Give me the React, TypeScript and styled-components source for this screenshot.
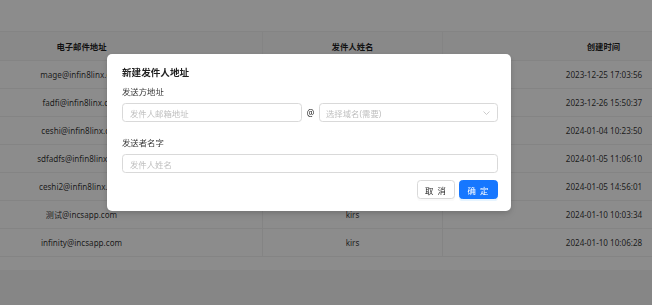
import React from "react";
import styled, { createGlobalStyle } from "styled-components";

const Global = createGlobalStyle`
  html, body { margin: 0; padding: 0; }
  body {
    width: 652px;
    height: 305px;
    overflow: hidden;
    background: #f5f5f5;
    font-family: "Noto Sans", "Noto Sans CJK SC", sans-serif;
    color: rgba(0,0,0,0.88);
  }
`;

const Page = styled.div`
  width: 652px;
  height: 305px;
  overflow: hidden;
`;

const Card = styled.div`
  background: #fff;
  padding: 31px 0 13px;
  overflow: hidden;
`;

const Table = styled.div`
  margin-left: -99px;
  width: 864px;
  display: grid;
  grid-template-columns: 362px 180px 322px;
  border-top: 1px solid #f0f0f0;
`;

const HeadCell = styled.div`
  height: 28px;
  display: flex;
  align-items: center;
  justify-content: center;
  background: #fafafa;
  font-size: 8.4px;
  font-weight: 700;
  border-bottom: 1px solid #f0f0f0;
  border-right: 1px solid #f0f0f0;
  &:last-child { border-right: none; }
`;

const Cell = styled.div<{ $last?: boolean }>`
  height: 27px;
  display: flex;
  align-items: center;
  justify-content: center;
  font-size: 8.1px;
  color: rgba(0,0,0,0.82);
  border-bottom: 1px solid #f0f0f0;
  border-right: ${(p) => (p.$last ? "none" : "1px solid #f0f0f0")};
  white-space: nowrap;
`;

const Mask = styled.div`
  position: fixed;
  inset: 0;
  background: rgba(0, 0, 0, 0.45);
  padding: 54px 0 0 107px;
`;

const Modal = styled.div`
  width: 404px;
  box-sizing: border-box;
  background: #fff;
  border-radius: 5px;
  padding: 12px 13px 12px 15px;
  box-shadow: 0 4px 10px rgba(0,0,0,0.08), 0 2px 5px rgba(0,0,0,0.12);
`;

const Title = styled.div`
  height: 14px;
  line-height: 14px;
  font-size: 9.6px;
  font-weight: 600;
  color: rgba(0,0,0,0.88);
`;

const FormItem = styled.div<{ $mt: number }>`
  margin-top: ${(p) => p.$mt}px;
`;

const Label = styled.div`
  height: 13px;
  line-height: 13px;
  font-size: 8.4px;
  margin-bottom: 5px;
  color: rgba(0,0,0,0.8);
`;

const Row = styled.div`
  display: flex;
  align-items: center;
`;

const Input = styled.div`
  box-sizing: border-box;
  height: 19px;
  border: 1px solid #d9d9d9;
  border-radius: 3.6px;
  padding: 0 7px;
  display: flex;
  align-items: center;
  font-size: 8.4px;
  color: #bfbfbf;
  flex: 1;
  white-space: nowrap;
`;

const InputFixed = styled(Input)`
  flex: 0 0 180px;
`;

const At = styled.span`
  width: 17px;
  text-align: center;
  font-size: 8.4px;
  color: rgba(0,0,0,0.88);
`;

const Select = styled(Input)`
  justify-content: space-between;
  padding: 0 7px 0 6px;
`;

const Footer = styled.div`
  margin-top: 7px;
  display: flex;
  justify-content: flex-end;
  gap: 4px;
`;

const Button = styled.button<{ $primary?: boolean }>`
  box-sizing: border-box;
  height: 19px;
  width: ${(p) => (p.$primary ? 39 : 38)}px;
  padding: 0;
  border-radius: 3.6px;
  font-family: inherit;
  font-size: 8.4px;
  letter-spacing: 1px;
  border: 1px solid ${(p) => (p.$primary ? "#1677ff" : "#d9d9d9")};
  background: ${(p) => (p.$primary ? "#1677ff" : "#fff")};
  color: ${(p) => (p.$primary ? "#fff" : "rgba(0,0,0,0.88)")};
  box-shadow: ${(p) => (p.$primary ? "0 2px 0 rgba(5,145,255,0.1)" : "0 2px 0 rgba(0,0,0,0.02)")};
`;

const rows = [
  ["mage@infin8linx.com", "kirs", "2023-12-25 17:03:56"],
  ["fadfi@infin8linx.com", "kirs", "2023-12-26 15:50:37"],
  ["ceshi@infin8linx.com", "kirs", "2024-01-04 10:23:50"],
  ["sdfadfs@infin8linx.com", "kirs", "2024-01-05 11:06:10"],
  ["ceshi2@infin8linx.com", "kirs", "2024-01-05 14:56:01"],
  ["测试@incsapp.com", "kirs", "2024-01-10 10:03:34"],
  ["infinity@incsapp.com", "kirs", "2024-01-10 10:06:28"],
];

export default function App() {
  return (
    <Page>
      <Global />
      <Card>
        <Table>
          <HeadCell>电子邮件地址</HeadCell>
          <HeadCell>发件人姓名</HeadCell>
          <HeadCell>创建时间</HeadCell>
          {rows.map((r, i) => (
            <React.Fragment key={i}>
              <Cell>{r[0]}</Cell>
              <Cell>{r[1]}</Cell>
              <Cell $last>{r[2]}</Cell>
            </React.Fragment>
          ))}
        </Table>
      </Card>
      <Mask>
        <Modal>
          <Title>新建发件人地址</Title>
          <FormItem $mt={5}>
            <Label>发送方地址</Label>
            <Row>
              <InputFixed>发件人邮箱地址</InputFixed>
              <At>@</At>
              <Select>
                <span>选择域名(需要)</span>
                <svg width="7" height="4" viewBox="0 0 7 4" fill="none">
                  <path d="M0.5 0.5 L3.5 3.5 L6.5 0.5" stroke="#bfbfbf" strokeWidth="0.8" />
                </svg>
              </Select>
            </Row>
          </FormItem>
          <FormItem $mt={14}>
            <Label>发送者名字</Label>
            <Row>
              <Input>发件人姓名</Input>
            </Row>
          </FormItem>
          <Footer>
            <Button>取 消</Button>
            <Button $primary>确 定</Button>
          </Footer>
        </Modal>
      </Mask>
    </Page>
  );
}
